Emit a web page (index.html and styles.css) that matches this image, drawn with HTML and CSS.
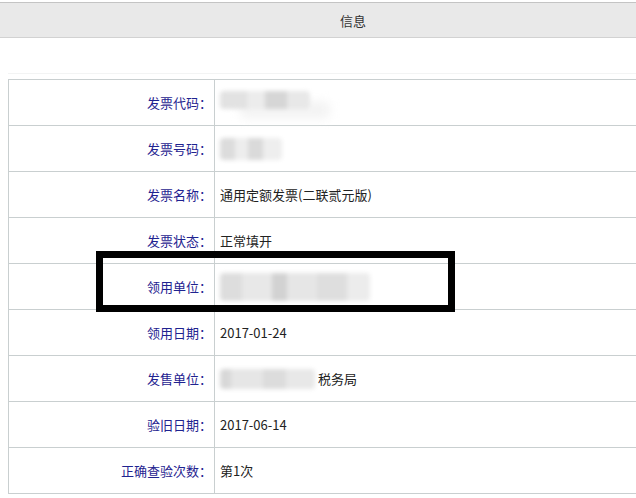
FILE: index.html
```html
<!DOCTYPE html>
<html lang="zh-CN">
<head>
<meta charset="utf-8">
<title>信息</title>
<link rel="stylesheet" href="styles.css">
</head>
<body>
<div class="page">
  <div class="header"><span class="title">信息</span></div>
  <div class="spacer"></div>
  <div class="table">
    <div class="label">发票代码：</div><div class="value"><span class="blur b1"></span></div>
    <div class="label">发票号码：</div><div class="value"><span class="blur b2"></span></div>
    <div class="label">发票名称：</div><div class="value">通用定额发票(二联贰元版)</div>
    <div class="label">发票状态：</div><div class="value">正常填开</div>
    <div class="label">领用单位：</div><div class="value"><span class="blur b5"></span></div>
    <div class="label">领用日期：</div><div class="value">2017-01-24</div>
    <div class="label">发售单位：</div><div class="value"><span class="blur b7"></span><span class="tail">税务局</span></div>
    <div class="label">验旧日期：</div><div class="value">2017-06-14</div>
    <div class="label">正确查验次数：</div><div class="value">第1次</div>
  </div>
  <div class="highlight"></div>
</div>
</body>
</html>
```
FILE: styles.css
```css
html, body {
  margin: 0;
  padding: 0;
  background: #ffffff;
  overflow: hidden;
}
.page {
  position: relative;
  width: 636px;
  height: 498px;
  font-family: "Noto Sans CJK SC", "Microsoft YaHei", sans-serif;
  font-size: 13px;
}
.header {
  margin-top: 2px;
  height: 34px;
  border-top: 1px solid #c4c4c4;
  border-bottom: 1px solid #d2d2d2;
  background: #e9e9e9;
  display: flex;
  align-items: center;
  justify-content: center;
  padding-left: 70px;
  box-sizing: content-box;
  color: #333;
}
.title {
  font-size: 13px;
}
.spacer {
  height: 35px;
  margin-left: 8px;
  border-bottom: 1px solid #f3f4f4;
}
.table {
  margin-left: 8px;
  margin-top: 5px;
  width: 640px;
  display: grid;
  grid-template-columns: 206px 1fr;
  border-top: 1px solid #c9cfd0;
  border-left: 1px solid #c9cfd0;
}
.label, .value {
  height: 45px;
  border-bottom: 1px solid #c9cfd0;
  display: flex;
  align-items: center;
  white-space: nowrap;
}
.label {
  justify-content: flex-end;
  border-right: 1px solid #c9cfd0;
  color: #1f2390;
  padding-right: 2px;
}
.value {
  padding-left: 5px;
  color: #222;
}
.blur {
  display: inline-block;
  filter: blur(2px);
  border-radius: 4px;
}
.b1 {
  width: 90px;
  height: 18px;
  margin-top: -6px;
  background: linear-gradient(90deg, #e2e2e2 0 30%, #ececec 30% 50%, #d6d6d6 50% 75%, #e8e8e8 75% 100%);
  box-shadow: 20px 10px 8px #f4f4f4;
}
.b2 {
  width: 62px;
  height: 22px;
  background: linear-gradient(90deg, #dcdcdc 0 25%, #ededed 25% 45%, #dadada 45% 70%, #eeeeee 70% 100%);
}
.b5 {
  width: 150px;
  height: 28px;
  background: linear-gradient(90deg, #dddddd 0 15%, #e8e8e8 15% 35%, #d2d2d2 35% 45%, #e6e6e6 45% 65%, #dedede 65% 85%, #ececec 85% 100%);
}
.b7 {
  width: 95px;
  height: 20px;
  background: linear-gradient(90deg, #d8d8d8 0 12%, #e6e6e6 12% 45%, #dcdcdc 45% 70%, #e8e8e8 70% 100%);
}
.tail {
  margin-left: 3px;
}
.highlight {
  position: absolute;
  left: 96px;
  top: 249px;
  width: 345px;
  height: 47px;
  border: 7px solid #000;
}
```
